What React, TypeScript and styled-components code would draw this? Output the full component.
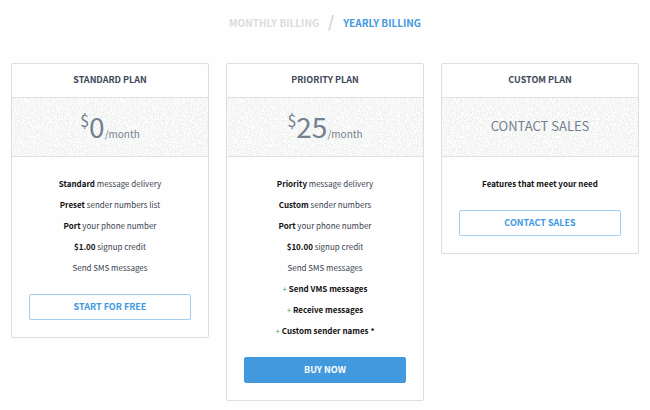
import React from "react";
import styled, { createGlobalStyle, css } from "styled-components";

const Global = createGlobalStyle`
  *, *::before, *::after { box-sizing: border-box; }
  body {
    margin: 0;
    background: #fefefe;
    color: #3b4350;
    font-family: "Noto Sans CJK SC", "Open Sans", sans-serif;
    font-size: 8px;
  }
`;

const grain = encodeURIComponent(
  `<svg xmlns="http://www.w3.org/2000/svg" width="96" height="58"><filter id="n" x="0" y="0" width="100%" height="100%"><feTurbulence type="fractalNoise" baseFrequency="0.7" numOctaves="2" seed="4" stitchTiles="stitch"/><feColorMatrix values="0 0 0 0 0.97  0 0 0 0 0.99  0 0 0 0 1  12 0 0 0 -5.8"/></filter><rect width="96" height="58" filter="url(#n)"/></svg>`
);

const Page = styled.main`
  padding: 11px 11px 9px;
`;

const Switcher = styled.nav`
  display: flex;
  justify-content: center;
  align-items: center;
  gap: 9px;
  height: 24px;
  margin-bottom: 28px;
`;

const Period = styled.button<{ $active?: boolean }>`
  border: 0;
  padding: 0;
  background: none;
  font: inherit;
  font-size: 10px;
  line-height: 24px;
  font-weight: 700;
  color: ${(p) => (p.$active ? "#4299e1" : "#dcdcdc")};
`;

const Slash = styled.span`
  padding-bottom: 4px;
  font-size: 16px;
  line-height: 20px;
  font-weight: 700;
  color: #d8d8d8;
`;

const Plans = styled.div`
  display: grid;
  grid-template-columns: repeat(3, 1fr);
  align-items: start;
  gap: 17px;
`;

const Card = styled.section`
  border: 1px solid #dcdedf;
  border-radius: 2px;
  background: #fefefe;
  text-align: center;
`;

const PlanName = styled.h2`
  margin: 0;
  padding-bottom: 2px;
  font-size: 9px;
  line-height: 31px;
  font-weight: 700;
  color: #3d4858;
`;

const Band = styled.div`
  display: flex;
  justify-content: center;
  align-items: center;
  height: 60px;
  border: solid #dfe2e2;
  border-width: 1px 0;
  background: #f2f3f0 url("data:image/svg+xml,${grain}");
  color: #74818e;
`;

const Price = styled.p`
  display: flex;
  align-items: baseline;
  margin: 0;
  padding-top: 5px;
  line-height: 40px;
`;

const Currency = styled.sup`
  align-self: flex-start;
  font-size: 16px;
  line-height: 28px;
`;

const Amount = styled.span`
  font-size: 28px;
`;

const Per = styled.span`
  font-size: 10px;
`;

const Quote = styled.p`
  margin: 0;
  padding-bottom: 4px;
  font-size: 13px;
`;

const Body = styled.div`
  padding: 16px 17px 17px;
`;

const Features = styled.ul`
  list-style: none;
  margin: 0 0 16px;
  padding: 0;
  line-height: 21px;

  strong {
    color: #111;
    font-weight: 700;
  }
`;

const Plus = styled.span`
  color: #48a868;
`;

const Action = styled.button<{ $filled?: boolean }>`
  display: block;
  width: 100%;
  height: 26px;
  padding: 0;
  border: 1px solid #a5cdef;
  border-radius: 2px;
  background: #fefefe;
  color: #4299e1;
  font: inherit;
  font-size: 9px;
  line-height: 24px;
  font-weight: 700;
  ${(p) =>
    p.$filled &&
    css`
      border-color: #4299de;
      background: #4299de;
      color: #fff;
    `}
`;

type Feature = { strong?: string; text?: string; extra?: boolean };
type Plan = {
  name: string;
  price?: string;
  features: Feature[];
  action: string;
  filled?: boolean;
};

const plans: Plan[] = [
  {
    name: "STANDARD PLAN",
    price: "0",
    features: [
      { strong: "Standard", text: " message delivery" },
      { strong: "Preset", text: " sender numbers list" },
      { strong: "Port", text: " your phone number" },
      { strong: "$1.00", text: " signup credit" },
      { text: "Send SMS messages" },
    ],
    action: "START FOR FREE",
  },
  {
    name: "PRIORITY PLAN",
    price: "25",
    features: [
      { strong: "Priority", text: " message delivery" },
      { strong: "Custom", text: " sender numbers" },
      { strong: "Port", text: " your phone number" },
      { strong: "$10.00", text: " signup credit" },
      { text: "Send SMS messages" },
      { strong: "Send VMS messages", extra: true },
      { strong: "Receive messages", extra: true },
      { strong: "Custom sender names *", extra: true },
    ],
    action: "BUY NOW",
    filled: true,
  },
  {
    name: "CUSTOM PLAN",
    features: [{ strong: "Features that meet your need" }],
    action: "CONTACT SALES",
  },
];

export default function App() {
  return (
    <>
      <Global />
      <Page>
        <Switcher aria-label="Billing period">
          <Period type="button">MONTHLY BILLING</Period>
          <Slash aria-hidden="true">/</Slash>
          <Period type="button" $active aria-pressed="true">
            YEARLY BILLING
          </Period>
        </Switcher>
        <Plans>
          {plans.map((plan) => (
            <Card key={plan.name}>
              <PlanName>{plan.name}</PlanName>
              <Band>
                {plan.price ? (
                  <Price>
                    <Currency>$</Currency>
                    <Amount>{plan.price}</Amount>
                    <Per>/month</Per>
                  </Price>
                ) : (
                  <Quote>CONTACT SALES</Quote>
                )}
              </Band>
              <Body>
                <Features>
                  {plan.features.map((f, i) => (
                    <li key={i}>
                      {f.extra && <Plus>+ </Plus>}
                      {f.strong && <strong>{f.strong}</strong>}
                      {f.text}
                    </li>
                  ))}
                </Features>
                <Action type="button" $filled={plan.filled}>
                  {plan.action}
                </Action>
              </Body>
            </Card>
          ))}
        </Plans>
      </Page>
    </>
  );
}
